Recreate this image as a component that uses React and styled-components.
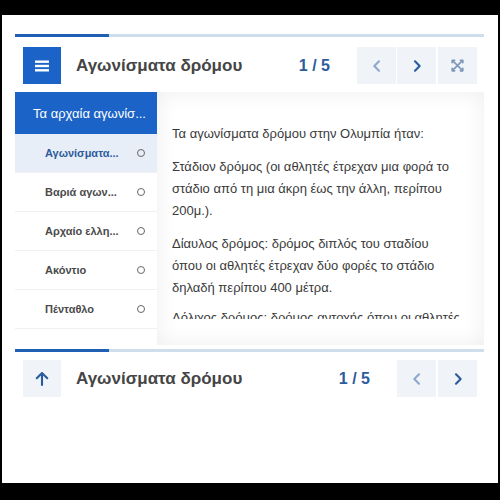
import React from "react";
import styled, { createGlobalStyle } from "styled-components";

const GlobalStyle = createGlobalStyle`
  html, body {
    margin: 0;
    padding: 0;
    background: #000;
  }
  body {
    font-family: "Liberation Sans", Arial, sans-serif;
  }
`;

const Frame = styled.div`
  margin: 15px 2px 0 2px;
  height: 468px;
  background: #fff;
  padding: 19px 14px 0 13px;
  box-sizing: border-box;
`;

const Progress = styled.div`
  height: 3px;
  background: #cfdeec;
  margin-bottom: ${(props) => props.gap}px;
`;

const ProgressFill = styled.div`
  height: 100%;
  background: #1f5fb4;
`;

const Bar = styled.div`
  display: flex;
  align-items: center;
  height: 37px;
  padding: 0 7px 0 8px;
`;

const IconButton = styled.button`
  width: ${(props) => props.w || 39}px;
  height: 37px;
  border: none;
  padding: 0;
  margin: 0 0 0 ${(props) => props.ml || 0}px;
  display: flex;
  align-items: center;
  justify-content: center;
  background: ${(props) => (props.primary ? "#1b63c6" : "#f0f4f9")};
  color: ${(props) => props.color || "#2a5b9e"};
  flex-shrink: 0;
`;

const Title = styled.h2`
  margin: 0 0 0 15px;
  font-size: 17px;
  font-weight: 700;
  color: #454545;
  flex: 1;
  white-space: nowrap;
`;

const Count = styled.span`
  font-size: 16px;
  font-weight: 700;
  color: #2d5c9c;
  margin-right: ${(props) => props.mr}px;
`;

const Main = styled.div`
  display: flex;
  height: 253px;
  margin-top: 8px;
`;

const Sidebar = styled.nav`
  width: 142px;
  flex-shrink: 0;
  background: #fff;
`;

const SideHead = styled.div`
  height: 42px;
  background: #1b63c6;
  color: #fff;
  font-size: 13px;
  display: flex;
  align-items: center;
  padding-left: 18px;
  white-space: nowrap;
`;

const Item = styled.div`
  height: 39px;
  display: flex;
  align-items: center;
  padding: 0 12px 0 30px;
  border-bottom: 1px solid #eef0f3;
  box-sizing: border-box;
  background: ${(props) => (props.active ? "#e8eef7" : "#fff")};
  color: ${(props) => (props.active ? "#2d5c9c" : "#4a4a4a")};
  font-size: 11px;
  font-weight: 700;
`;

const ItemLabel = styled.span`
  flex: 1;
  white-space: nowrap;
`;

const Dot = styled.span`
  width: 6px;
  height: 6px;
  border: 1.5px solid #666;
  border-radius: 50%;
`;

const Content = styled.div`
  flex: 1;
  padding: 0 22px 26px 15px;
  box-shadow: inset 0 0 22px rgba(0, 0, 0, 0.07);
  display: flex;
  flex-direction: column;
`;

const Scroll = styled.div`
  flex: 1;
  overflow: hidden;
  padding-top: 31px;
  color: #3a3a3a;
  font-size: 13px;
  line-height: 22px;
`;

const Para = styled.p`
  margin: 0 0 ${(props) => props.mb ?? 11}px 0;
`;

const Footer = styled.div`
  margin-top: 4px;
`;

const Chevron = ({ dir }) => (
  <svg width="16" height="16" viewBox="0 0 24 24" fill="none" stroke="currentColor" strokeWidth="3.2" strokeLinecap="round" strokeLinejoin="round">
    {dir === "left" ? <polyline points="15 5 8 12 15 19" /> : <polyline points="9 5 16 12 9 19" />}
  </svg>
);

const Menu = () => (
  <svg width="16" height="16" viewBox="0 0 16 16" fill="#fff">
    <rect x="1" y="2.5" width="14" height="2.4" />
    <rect x="1" y="6.8" width="14" height="2.4" />
    <rect x="1" y="11.1" width="14" height="2.4" />
  </svg>
);

const Expand = () => (
  <svg width="15" height="15" viewBox="0 0 24 24" fill="none" stroke="currentColor" strokeWidth="2.6" strokeLinecap="round" strokeLinejoin="round">
    <path d="M5 5l14 14M19 5L5 19" />
    <path d="M3.5 7.5v-4h4M16.5 3.5h4v4M3.5 16.5v4h4M20.5 16.5v4h-4" />
  </svg>
);

const ArrowUp = () => (
  <svg width="18" height="18" viewBox="0 0 24 24" fill="none" stroke="currentColor" strokeWidth="2.8" strokeLinecap="round" strokeLinejoin="round">
    <path d="M12 20V5M5 11l7-7 7 7" />
  </svg>
);

const items = ["Αγωνίσματα...", "Βαριά αγων...", "Αρχαίο ελλη...", "Ακόντιο", "Πένταθλο"];
const progress = 1 / 5;

export default function App() {
  return (
    <>
      <GlobalStyle />
      <Frame>
        <Progress gap={10}>
          <ProgressFill style={{ width: `${progress * 100}%` }} />
        </Progress>
        <Bar>
          <IconButton primary w={38}>
            <Menu />
          </IconButton>
          <Title>Αγωνίσματα δρόμου</Title>
          <Count mr={27}>1 / 5</Count>
          <IconButton color="#8fa9cc">
            <Chevron dir="left" />
          </IconButton>
          <IconButton ml={1}>
            <Chevron dir="right" />
          </IconButton>
          <IconButton ml={2} color="#7d97bb">
            <Expand />
          </IconButton>
        </Bar>
        <Main>
          <Sidebar>
            <SideHead>Τα αρχαία αγωνίσ...</SideHead>
            {items.map((t, i) => (
              <Item key={t} active={i === 0}>
                <ItemLabel>{t}</ItemLabel>
                <Dot />
              </Item>
            ))}
          </Sidebar>
          <Content>
            <Scroll>
              <Para>Τα αγωνίσματα δρόμου στην Ολυμπία ήταν:</Para>
              <Para>
                Στάδιον δρόμος (οι αθλητές έτρεχαν μια φορά το στάδιο από τη μια άκρη έως την άλλη, περίπου 200μ.).
              </Para>
              <Para mb={8}>
                Δίαυλος δρόμος: δρόμος διπλός του σταδίου όπου οι αθλητές έτρεχαν δύο φορές το στάδιο δηλαδή περίπου 400 μέτρα.
              </Para>
              <Para>
                Δόλιχος δρόμος: δρόμος αντοχής όπου οι αθλητές έτρεχαν πολλές φορές το στάδιο.
              </Para>
            </Scroll>
          </Content>
        </Main>
        <Footer>
          <Progress gap={8}>
            <ProgressFill style={{ width: `${progress * 100}%` }} />
          </Progress>
          <Bar>
            <IconButton w={38}>
              <ArrowUp />
            </IconButton>
            <Title>Αγωνίσματα δρόμου</Title>
            <Count mr={27}>1 / 5</Count>
            <IconButton color="#8fa9cc">
              <Chevron dir="left" />
            </IconButton>
            <IconButton ml={2}>
              <Chevron dir="right" />
            </IconButton>
          </Bar>
        </Footer>
      </Frame>
    </>
  );
}
